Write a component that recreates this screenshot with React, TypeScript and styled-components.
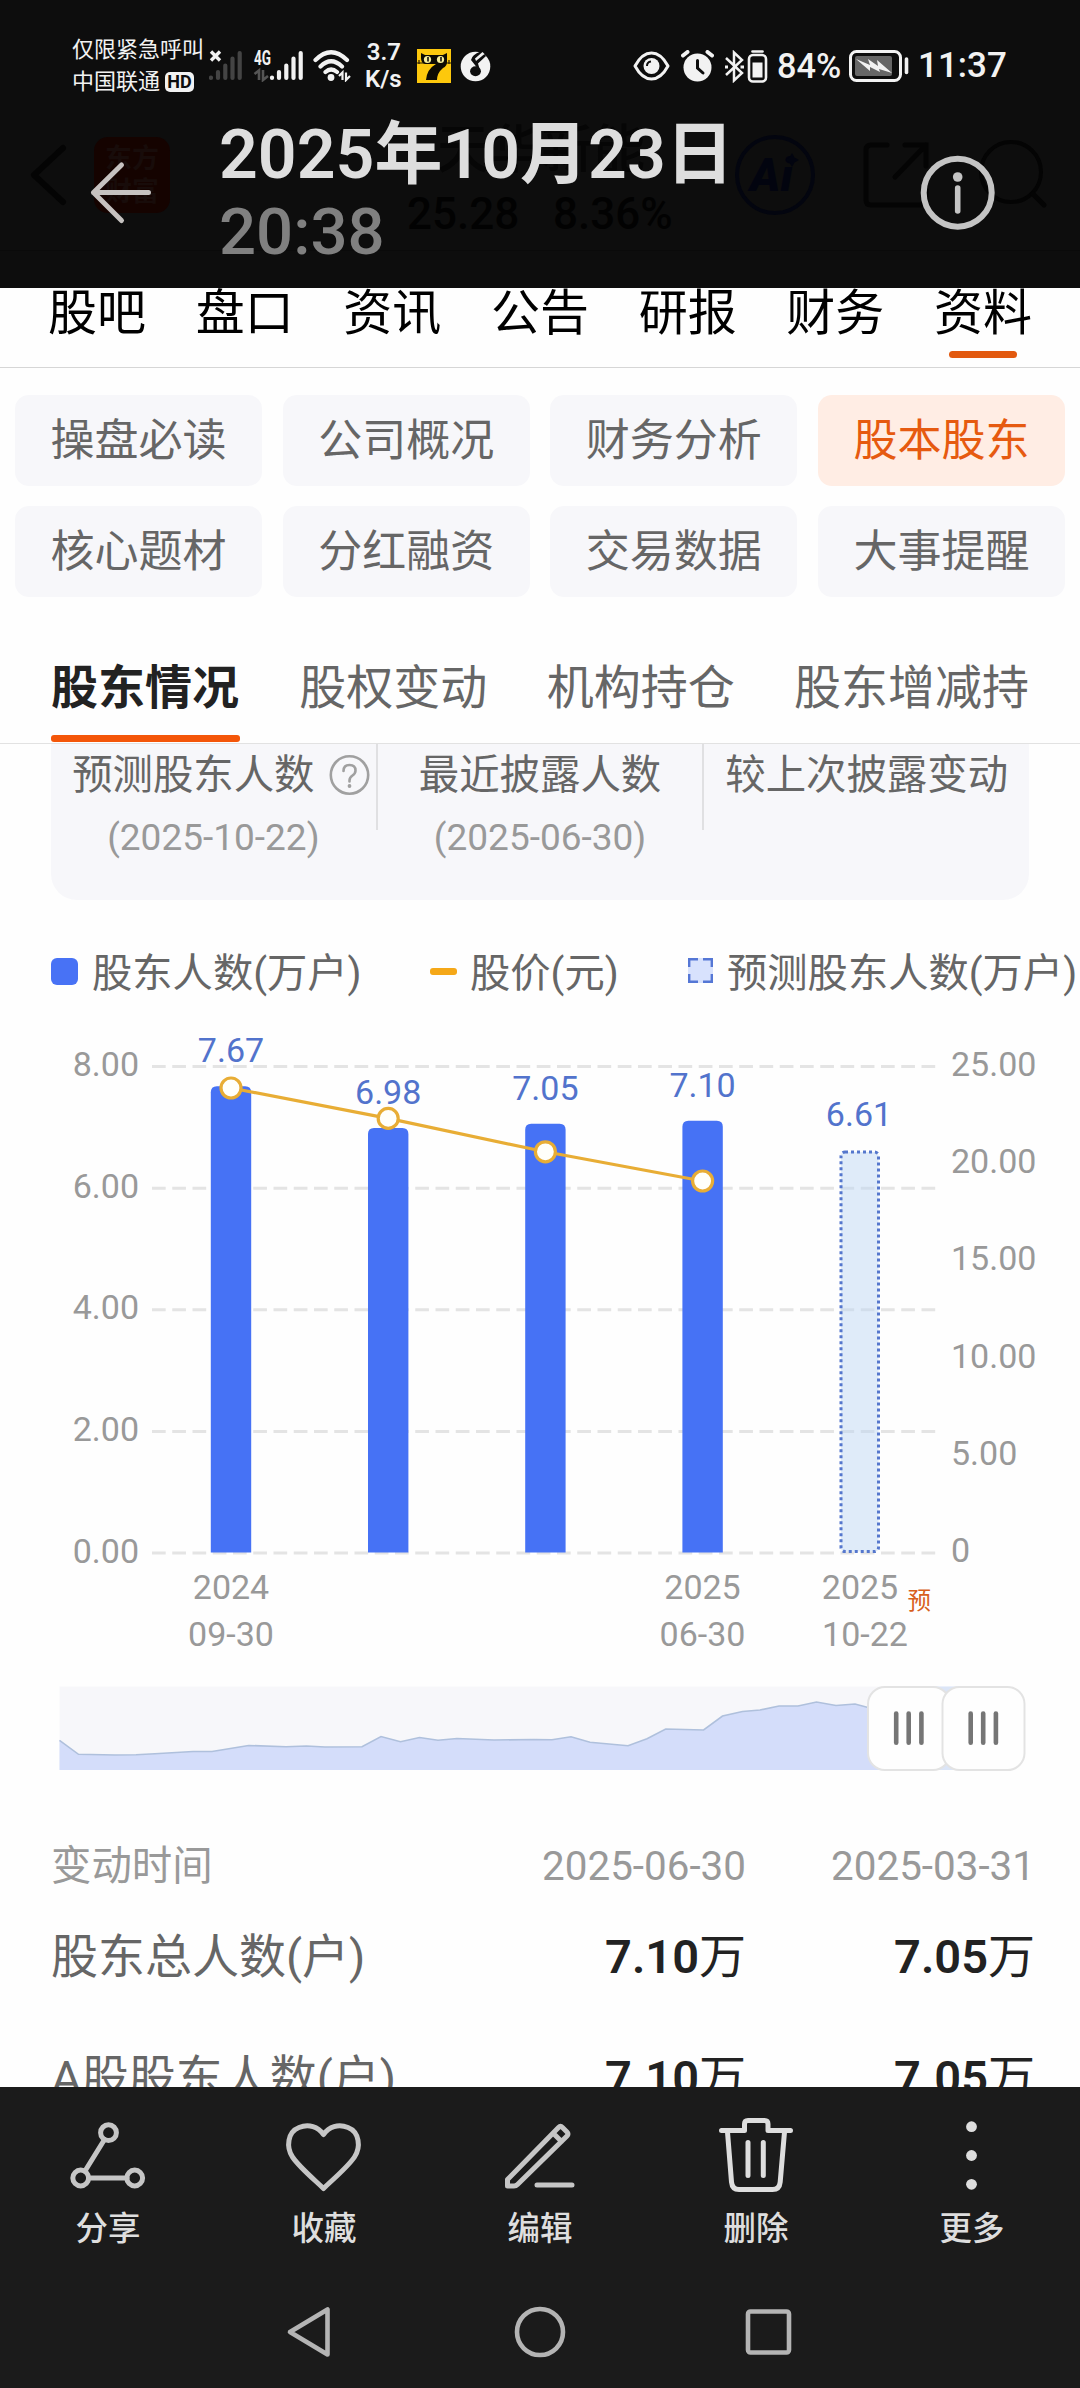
import React from "react";
import styled, { createGlobalStyle } from "styled-components";

const Global = createGlobalStyle`
  * { box-sizing: border-box; }
  body { margin: 0; background: #fff; }
  body, svg text { font-family: Roboto, "Noto Sans CJK SC", sans-serif; }
  svg { display: block; flex: none; }
`;

const Screen = styled.div`
  width: 1080px;
  height: 2388px;
  display: flex;
  flex-direction: column;
  overflow: hidden;
  background: #fefefe;
`;

/* ---------- dark overlay header ---------- */
const Header = styled.header`
  position: relative;
  height: 288px;
  flex: none;
  background: #0d0d0d;
  color: #f2f2f2;
  overflow: hidden;
`;
const Ghost = styled.svg`
  position: absolute;
  left: 0;
  top: 0;
`;
const StatusBar = styled.div`
  position: relative;
  height: 132px;
  display: flex;
  align-items: center;
  padding-left: 72px;
`;
const Carrier = styled.div`
  width: 134px;
  display: flex;
  flex-direction: column;
  gap: 10px;
  font-size: 22px;
  line-height: 22px;
  white-space: nowrap;
`;
const CarrierLine = styled.div`
  display: flex;
  align-items: center;
  gap: 5px;
  height: 22px;
`;
const HdBadge = styled.span`
  width: 29px;
  height: 20px;
  border-radius: 5px;
  background: #f2f2f2;
  color: #0d0d0d;
  font-size: 18px;
  font-weight: 700;
  line-height: 20px;
  text-align: center;
`;
const Speed = styled.div`
  width: 36px;
  margin-left: 12px;
  margin-right: 1px;
  font-size: 24px;
  line-height: 27px;
  font-weight: 600;
  text-align: right;
`;
const StatusText = styled.span<{ $ml: number; $w: number; $size: number }>`
  margin-left: ${(p) => p.$ml}px;
  width: ${(p) => p.$w}px;
  font-size: ${(p) => p.$size}px;
  line-height: 40px;
  font-weight: 500;
  white-space: nowrap;
`;
const IconSlot = styled.span<{ $ml: number }>`
  margin-left: ${(p) => p.$ml}px;
  display: flex;
`;
const TitleBar = styled.div`
  position: relative;
  height: 156px;
  display: flex;
  padding-left: 88px;
`;
const BackSlot = styled.div`
  width: 131px;
  padding-top: 28px;
`;
const TitleText = styled.div`
  width: 699px;
  margin-top: -17px;
`;
const DateLine = styled.div`
  font-size: 68px;
  line-height: 80px;
  font-weight: 600;
  color: #dedede;
  white-space: nowrap;
`;
const TimeLine = styled.div`
  font-size: 65.3px;
  line-height: 74px;
  font-weight: 500;
  color: #808080;
`;
const InfoSlot = styled.div`
  padding-top: 21px;
`;

/* ---------- page content ---------- */
const Content = styled.main`
  height: 1799px;
  flex: none;
  display: flex;
  flex-direction: column;
  overflow: hidden;
`;
const TopTabs = styled.nav`
  height: 80px;
  flex: none;
  display: flex;
  justify-content: space-between;
  padding: 0 48px;
  border-bottom: 1px solid #d6d6d6;
`;
const TopTab = styled.div`
  height: 79px;
  padding-top: 2px;
  display: flex;
  flex-direction: column;
  align-items: center;
  font-size: 49px;
  line-height: 48px;
  color: #000;
`;
const TopMark = styled.span`
  width: 68px;
  height: 7px;
  margin-top: 13px;
  border-radius: 4px;
  background: #e2590f;
`;
const ChipGrid = styled.div`
  display: grid;
  grid-template-columns: repeat(4, 247px);
  justify-content: space-between;
  row-gap: 20px;
  padding: 27px 15px 0;
`;
const Chip = styled.div<{ $on?: boolean }>`
  height: 91px;
  padding-top: 1px;
  border-radius: 14px;
  background: ${(p) => (p.$on ? "#ffede4" : "#f7f7fa")};
  color: ${(p) => (p.$on ? "#e65a10" : "#666")};
  font-size: 44px;
  line-height: 90px;
  text-align: center;
`;
const SubTabs = styled.nav`
  height: 147px;
  flex: none;
  display: flex;
  justify-content: space-between;
  padding: 0 51px;
  border-bottom: 1px solid #e2e2e2;
`;
const SubTab = styled.div<{ $on?: boolean }>`
  height: 146px;
  display: flex;
  flex-direction: column;
  padding-top: 64px;
  font-size: 47px;
  line-height: 54px;
  font-weight: ${(p) => (p.$on ? 700 : 400)};
  color: ${(p) => (p.$on ? "#222" : "#666")};
`;
const SubMark = styled.span`
  height: 7px;
  margin-top: 20px;
  width: 189px;
  border-radius: 3px;
  background: #f45609;
`;
const Summary = styled.section`
  height: 156px;
  flex: none;
  margin: 0 51px;
  display: flex;
  border-radius: 0 0 26px 26px;
  background: #f7f7fa;
`;
const SummaryCol = styled.div`
  flex: 1;
  height: 86px;
  display: flex;
  flex-direction: column;
  align-items: center;
  padding-top: 8px;
  & + & { border-left: 2px solid #e0e0e2; }
`;
const SummaryTitle = styled.div<{ $shift?: number }>`
  display: flex;
  align-items: center;
  gap: 14px;
  margin-left: ${(p) => p.$shift ?? 0}px;
  font-size: 40.4px;
  line-height: 48px;
  color: #666;
  white-space: nowrap;
`;
const SummaryDate = styled.div`
  margin-top: 16px;
  font-size: 37px;
  line-height: 44px;
  color: #999;
`;
const Legend = styled.div`
  display: flex;
  align-items: center;
  height: 48px;
  margin-top: 50px;
  padding-left: 51px;
  font-size: 40.3px;
  line-height: 48px;
  color: #666;
  white-space: nowrap;
`;
const LegendItem = styled.div<{ $w: number; $gap: number }>`
  width: ${(p) => p.$w}px;
  display: flex;
  flex: none;
  align-items: center;
  gap: ${(p) => p.$gap}px;
`;
const Swatch = styled.span`
  width: 27px;
  height: 27px;
  margin-bottom: 6px;
  border-radius: 6px;
  background: #4872f5;
`;
const Dash = styled.span`
  width: 27px;
  height: 7px;
  margin-bottom: 5px;
  border-radius: 3px;
  background: #f5a818;
`;
const DashedSwatch = styled.svg`
  margin-bottom: 7px;
`;
const Table = styled.section`
  display: flex;
  flex-direction: column;
  padding: 68px 45px 0 51px;
`;
const Row = styled.div<{ $h: number; $head?: boolean }>`
  height: ${(p) => p.$h}px;
  flex: none;
  display: grid;
  grid-template-columns: 1fr 285px 289px;
  align-items: center;
  font-size: ${(p) => (p.$head ? 40.4 : 47)}px;
  color: ${(p) => (p.$head ? "#999" : "#666")};
  white-space: nowrap;
`;
const HeadCell = styled.span<{ $right?: boolean }>`
  line-height: 48px;
  padding-bottom: 1px;
  text-align: ${(p) => (p.$right ? "right" : "left")};
`;
const Value = styled.span`
  text-align: right;
  color: #222;
  b { font-weight: 600; }
`;

/* ---------- bottom bars ---------- */
const Bottom = styled.footer`
  height: 301px;
  flex: none;
  background: #1b1b1b;
`;
const Actions = styled.div`
  height: 187px;
  display: grid;
  grid-template-columns: repeat(5, 216px);
`;
const Action = styled.div`
  display: flex;
  flex-direction: column;
  align-items: center;
  padding-top: 28px;
  font-size: 32.5px;
  line-height: 40px;
  font-weight: 500;
  color: #dedede;
`;
const ActionLabel = styled.span`
  margin-top: 14px;
`;
const NavKeys = styled.div`
  display: flex;
  justify-content: center;
  gap: 174px;
  padding-top: 30px;
`;

const BARS = [
  { x: 231, v: 7.67, label: "7.67", price: 1088 },
  { x: 388.2, v: 6.98, label: "6.98", price: 1118.4 },
  { x: 545.4, v: 7.05, label: "7.05", price: 1151.8 },
  { x: 702.6, v: 7.1, label: "7.10", price: 1181 },
];
const BASE = 1552.5;
const PER_UNIT = 60.8;
const topOf = (v: number) => BASE - v * PER_UNIT;

const roundTop = (x: number, y: number, w: number, r: number) =>
  `M${x} ${BASE}V${y + r}Q${x} ${y} ${x + r} ${y}H${x + w - r}Q${x + w} ${y} ${x + w} ${y + r}V${BASE}Z`;

function Chart() {
  return (
    <svg width="1080" height="676" viewBox="0 998 1080 676" fontSize="34">
      {[0, 2, 4, 6, 8].map((v) => (
        <g key={v}>
          <line x1="152" x2="936" y1={topOf(v) + 0.5} y2={topOf(v) + 0.5} stroke="#e4e4e4" strokeWidth="3" strokeDasharray="13.7 6.55" />
          <text x="139" y={topOf(v) + 10} textAnchor="end" fill="#999">{v.toFixed(2)}</text>
        </g>
      ))}
      {["0", "5.00", "10.00", "15.00", "20.00", "25.00"].map((t, i) => (
        <text key={t} x="951" y={1562 - i * 97.2} fill="#999">{t}</text>
      ))}
      {BARS.map((b) => (
        <path key={b.x} d={roundTop(b.x - 20.2, topOf(b.v), 40.4, 6)} fill="#4672f5" />
      ))}
      <rect x="841" y="1152" width="37.5" height="399.5" rx="4" fill="#bcd5f4" fillOpacity=".46" stroke="#5577cd" strokeWidth="3" strokeDasharray="3 3" />
      <polyline points={BARS.map((b) => `${b.x},${b.price}`).join(" ")} fill="none" stroke="#e8ad35" strokeWidth="3.2" />
      {BARS.map((b) => (
        <circle key={b.x} cx={b.x} cy={b.price} r="10" fill="#fffffa" stroke="#e8ad35" strokeWidth="3.2" />
      ))}
      {[...BARS, { x: 859, v: 6.61, label: "6.61" }].map((b) => (
        <text key={b.label} x={b.x} y={topOf(b.v) - 24.2} textAnchor="middle" fill="#5273cc">{b.label}</text>
      ))}
      <g fill="#999" textAnchor="middle">
        <text x="231" y="1599">2024</text>
        <text x="231" y="1646">09-30</text>
        <text x="702.500" y="1599">2025</text>
        <text x="702.500" y="1646">06-30</text>
        <text x="860" y="1599">2025</text>
        <text x="865" y="1646">10-22</text>
      </g>
      <text x="907.500" y="1609" fontSize="23.5" fill="#d8601c">预</text>
    </svg>
  );
}

const TREND =
  "59.5,1740.3 78.5,1754.3 115,1755 136,1754.7 155,1753.7 193,1751.5 212,1751.5 248.6,1745.5 286,1746.7 306.5,1746 325,1747 362,1746.7 381,1736.5 400.5,1741.7 419.5,1737.5 438,1740.3 457,1738.5 494,1740 534,1739.5 552,1739.7 571,1736.7 590,1742.3 628,1745.7 647,1738.7 665.7,1729 703.6,1730 722.5,1716 742.5,1711.5 760,1710 779,1706 798,1706 816.5,1702 836,1705.5 855,1704 868,1707.5 985,1707.5";

function RangeStrip() {
  return (
    <svg width="1080" height="100" viewBox="0 1674 1080 100">
      <rect x="59.5" y="1686.5" width="925" height="83.5" fill="#f7f7fa" />
      <polygon points={`59.5,1770 ${TREND} 985,1770`} fill="#d4ddfa" />
      <polyline points={TREND} fill="none" stroke="#afc0dc" strokeWidth="1.6" />
      <rect x="900" y="1686.5" width="85" height="83.5" fill="#dbe5f7" />
      {[868, 942.5].map((x) => (
        <g key={x}>
          <rect x={x} y="1687" width="82" height="83" rx="17" fill="#fefefe" stroke="#e3e3e3" strokeWidth="2" />
          {[28.2, 40.7, 53.4].map((d) => (
            <line key={d} x1={x + d} x2={x + d} y1="1713.5" y2="1742.8" stroke="#757575" strokeWidth="4.6" strokeLinecap="round" />
          ))}
        </g>
      ))}
    </svg>
  );
}

function GhostToolbar() {
  return (
    <Ghost width="1080" height="288" viewBox="0 0 1080 288" fill="none">
      <path d="M63 148L34 175L63 202" stroke="#040404" strokeWidth="6" strokeLinecap="round" strokeLinejoin="round" />
      <rect x="94" y="137" width="76" height="76" rx="14" fill="#150300" />
      <g fill="#180c0a" fontSize="27" fontWeight="700">
        <text x="105" y="168">东方</text>
        <text x="105" y="201">财富</text>
      </g>
      <text x="437" y="168" fontSize="52" fontWeight="500" fill="#060606">天华新能</text>
      <g fill="#020202" fontSize="44" fontWeight="500">
        <text x="407" y="229">25.28</text>
        <text x="553" y="229">8.36%</text>
      </g>
      <circle cx="775" cy="175" r="38" stroke="#03050f" strokeWidth="4" />
      <text x="750" y="191" fontSize="46" fontWeight="900" fontStyle="italic" fill="#02040f">Ai</text>
      <path d="M792 153l2.500 4.500 4.500 2.500-4.500 2.500-2.500 4.500-2.500-4.500-4.500-2.500 4.500-2.500z" fill="#02040f" />
      <path d="M887 145H871Q866 145 866 150V200Q866 205 871 205H921Q926 205 926 200V190M905 145H926V166M926 145L895 177" stroke="#040404" strokeWidth="5" strokeLinecap="round" />
      <circle cx="1011" cy="172" r="30" stroke="#040404" strokeWidth="4" />
      <path d="M1033 194L1044 205" stroke="#040404" strokeWidth="5" strokeLinecap="round" />
      <path d="M0 250.500H1080" stroke="#0a0a0a" />
    </Ghost>
  );
}

const Signal = ({ color }: { color: string }) => (
  <g stroke={color} strokeWidth="4.200" strokeLinecap="round">
    <path d="M2 27.500V28M9 22V28M16.300 15.500V28M23.500 8.500V28M30.700 3V28" />
  </g>
);

function StatusIcons() {
  return (
    <StatusBar>
      <Carrier>
        <CarrierLine>仅限紧急呼叫</CarrierLine>
        <CarrierLine>中国联通<HdBadge>HD</HdBadge></CarrierLine>
      </Carrier>
      <IconSlot $ml={3}>
        <svg width="35" height="32" viewBox="0 0 35 32" fill="none">
          <Signal color="#444" />
          <path d="M2 1.500L11 10.500M11 1.500L2 10.500" stroke="#f2f2f2" strokeWidth="3.400" />
        </svg>
      </IconSlot>
      <IconSlot $ml={9}>
        <svg width="53" height="32" viewBox="0 0 53 32" fill="none">
          <text x="1" y="14.500" fontSize="20" fontWeight="700" fill="#f2f2f2" textLength="17" lengthAdjust="spacingAndGlyphs">4G</text>
          <path d="M1.500 24L6 20.500V30M10 20V30L15 26" stroke="#555" strokeWidth="2.600" />
          <g transform="translate(17 0)"><Signal color="#f2f2f2" /></g>
        </svg>
      </IconSlot>
      <IconSlot $ml={7}>
        <svg width="40" height="32" viewBox="0 0 40 32" fill="none" stroke="#f2f2f2" strokeWidth="4.200" strokeLinecap="round">
          <path d="M2.500 10Q18 -5.500 34 10M7.500 16.500Q18 6 29 16.500M12.500 22Q18 17 24 22" />
          <circle cx="18" cy="27.500" r="3.400" fill="#f2f2f2" stroke="none" />
          <path d="M26 26L29.500 22.500V30M33 22.500V30L37 26" strokeWidth="2.200" strokeLinecap="butt" />
        </svg>
      </IconSlot>
      <Speed>3.7<br />K/s</Speed>
      <IconSlot $ml={15}>
        <svg width="34" height="34" viewBox="0 0 34 34">
          <rect width="34" height="34" fill="#fdc80c" />
          <path d="M0 14H34M2 11V15M32 11V15" stroke="#231a05" strokeWidth="1.200" />
          <path d="M4 4L8 6H26L30 4V13Q30 17 26 19Q20 24 20 31H9Q10 20 19 15H8Q4 14 4 9Z" fill="#0d0a03" />
          <circle cx="10.500" cy="10.500" r="3.600" fill="#f7ef9a" />
          <circle cx="23.500" cy="10.500" r="3.600" fill="#f7ef9a" />
          <path d="M11 8V12.500M24 8V12.500" stroke="#111" strokeWidth="1.600" />
        </svg>
      </IconSlot>
      <IconSlot $ml={9}>
        <svg width="31" height="31" viewBox="0 0 31 31">
          <circle cx="15.500" cy="15.500" r="14.800" fill="#f2f2f2" />
          <path d="M20.500 .5Q12 3.500 11 9L20.500 21L18 12.500L26 5Z" fill="#0d0d0d" />
          <ellipse cx="15.500" cy="20.300" rx="5.400" ry="5" fill="#0d0d0d" />
          <path d="M22.500 1L15 7.500L16 10L24.500 3Z" fill="#f2f2f2" />
        </svg>
      </IconSlot>
      <IconSlot $ml={142}>
        <svg width="37" height="30" viewBox="0 0 37 30" fill="none">
          <path d="M2 15Q9 2 18.500 2T35 15Q28 28 18.500 28T2 15Z" stroke="#f2f2f2" strokeWidth="3" strokeLinejoin="round" />
          <circle cx="18.500" cy="15" r="8" fill="#f2f2f2" />
          <path d="M14 15Q14 11 18 10.500" stroke="#0d0d0d" strokeWidth="2" />
        </svg>
      </IconSlot>
      <IconSlot $ml={11}>
        <svg width="33" height="32" viewBox="0 0 33 32" fill="none">
          <circle cx="16.500" cy="17.500" r="14" fill="#f2f2f2" />
          <path d="M2 5.500L6.500 2M31 5.500L26.500 2" stroke="#f2f2f2" strokeWidth="4" strokeLinecap="round" />
          <path d="M16.500 10.500V18L22 23" stroke="#0d0d0d" strokeWidth="3" strokeLinecap="round" />
        </svg>
      </IconSlot>
      <IconSlot $ml={10}>
        <svg width="44" height="33" viewBox="0 0 44 33" fill="none" stroke="#f2f2f2">
          <path d="M2 8L18 23L10 30.500V2.500L18 10L2 25" strokeWidth="2.500" />
          <path d="M1 17H4M16.500 17H20" strokeWidth="3" />
          <rect x="25" y="5" width="17" height="26.500" rx="4" strokeWidth="2.600" />
          <path d="M28.500 1.500H38.500" strokeWidth="2.600" strokeLinecap="round" />
          <rect x="28.500" y="12.500" width="10" height="15" fill="#f2f2f2" stroke="none" />
        </svg>
      </IconSlot>
      <StatusText $ml={9} $w={65} $size={34.3}>84%</StatusText>
      <IconSlot $ml={7}>
        <svg width="60" height="32" viewBox="0 0 60 32" fill="none">
          <rect x="1.500" y="1.500" width="50" height="29" rx="6" stroke="#f2f2f2" strokeWidth="3" />
          <rect x="6" y="6" width="37" height="20" rx="2" fill="#666" />
          <path d="M7 9L21 15L19 9L29 16L28 10L43 23L30 19L31 22L21 17V21Z" fill="#f2f2f2" />
          <path d="M57.500 9V22.500" stroke="#f2f2f2" strokeWidth="3.600" strokeLinecap="round" />
        </svg>
      </IconSlot>
      <StatusText $ml={9} $w={92} $size={35}>11:37</StatusText>
    </StatusBar>
  );
}

const ACTIONS = [
  {
    label: "分享",
    icon: (
      <g>
        <circle cx="40.500" cy="17.700" r="7.900" />
        <circle cx="12.700" cy="63" r="7.900" />
        <circle cx="66.700" cy="63" r="7.900" />
        <path d="M36.500 24.500L17 56M20.500 63H59" />
      </g>
    ),
  },
  {
    label: "收藏",
    icon: <path d="M39.500 73.500C32 66 16 53 8.500 42C2 32 3.500 17 15 12.500C25 8.500 34 12 39.500 19.500C45 12 54 8.500 64 12.500C75.500 17 77 32 70.500 42C63 53 47 66 39.500 73.500Z" />,
  },
  {
    label: "编辑",
    icon: (
      <g>
        <path d="M7.500 71V64.500L58.500 12.500Q60.500 10.500 62.500 12.500L67 17Q69 19 67 21L17.500 69.500Q16 71 14 71ZM53.500 18.500L61.500 26.500M37 70H72" />
      </g>
    ),
  },
  {
    label: "删除",
    icon: (
      <g stroke="#dedede">
        <path d="M5.500 15.500H28.500V9Q28.500 5.500 32 5.500H48.500Q52 5.500 52 9V15.500H74.500M11.500 17L15.500 67Q16.200 74.500 23 74.500H56.500Q63.500 74.500 64.200 67L68.500 17M32 27.500V60.500M47.300 27.500V60.500" />
      </g>
    ),
  },
  {
    label: "更多",
    icon: (
      <g fill="#dedede" stroke="none">
        <circle cx="39.500" cy="11.700" r="5.400" />
        <circle cx="39.500" cy="40.500" r="5.400" />
        <circle cx="39.500" cy="69.300" r="5.400" />
      </g>
    ),
  },
];

const TOP_TABS = ["股吧", "盘口", "资讯", "公告", "研报", "财务", "资料"];
const CHIPS = ["操盘必读", "公司概况", "财务分析", "股本股东", "核心题材", "分红融资", "交易数据", "大事提醒"];
const SUB_TABS = ["股东情况", "股权变动", "机构持仓", "股东增减持"];
const ROWS = ["股东总人数(户)", "A股股东人数(户)"];

export default function App() {
  return (
    <Screen>
      <Global />
      <Header>
        <GhostToolbar />
        <StatusIcons />
        <TitleBar>
          <BackSlot>
            <svg width="66" height="66" viewBox="0 0 66 66" fill="none" stroke="#c6c2c0" strokeWidth="5" strokeLinecap="round" strokeLinejoin="round">
              <path d="M33.500 5L5.500 32.500L33.500 60.500M5.500 32.500H60.500" />
            </svg>
          </BackSlot>
          <TitleText>
            <DateLine>2025年10月23日</DateLine>
            <TimeLine>20:38</TimeLine>
          </TitleText>
          <InfoSlot>
            <svg width="80" height="80" viewBox="0 0 80 80" fill="none" stroke="#c4c4c4" strokeLinecap="round">
              <circle cx="39.700" cy="39.700" r="34" strokeWidth="6" />
              <circle cx="39.700" cy="24" r="4.800" fill="#c4c4c4" stroke="none" />
              <path d="M39.700 35V58" strokeWidth="5.600" />
            </svg>
          </InfoSlot>
        </TitleBar>
      </Header>

      <Content>
        <TopTabs>
          {TOP_TABS.map((t) => (
            <TopTab key={t}>
              {t}
              {t === "资料" && <TopMark />}
            </TopTab>
          ))}
        </TopTabs>
        <ChipGrid>
          {CHIPS.map((c) => (
            <Chip key={c} $on={c === "股本股东"}>{c}</Chip>
          ))}
        </ChipGrid>
        <SubTabs>
          {SUB_TABS.map((t, i) => (
            <SubTab key={t} $on={i === 0}>
              {t}
              {i === 0 && <SubMark />}
            </SubTab>
          ))}
        </SubTabs>
        <Summary>
          <SummaryCol>
            <SummaryTitle $shift={15}>
              预测股东人数
              <svg width="41" height="42" viewBox="0 0 41 42" fill="none" stroke="#a0a0a0" strokeWidth="2.600">
                <circle cx="20.500" cy="20" r="18.700" />
                <path d="M14.500 16Q14.500 10 20.500 10T26.500 15.500Q26.500 18.500 23.500 20.500T20.500 25.500V26.500" strokeLinecap="round" />
                <circle cx="20.500" cy="31" r="1.900" fill="#a0a0a0" stroke="none" />
              </svg>
            </SummaryTitle>
            <SummaryDate>(2025-10-22)</SummaryDate>
          </SummaryCol>
          <SummaryCol>
            <SummaryTitle>最近披露人数</SummaryTitle>
            <SummaryDate>(2025-06-30)</SummaryDate>
          </SummaryCol>
          <SummaryCol>
            <SummaryTitle>较上次披露变动</SummaryTitle>
          </SummaryCol>
        </Summary>
        <Legend>
          <LegendItem $w={379} $gap={14}><Swatch />股东人数(万户)</LegendItem>
          <LegendItem $w={258} $gap={13}><Dash />股价(元)</LegendItem>
          <LegendItem $w={392} $gap={14}>
            <DashedSwatch width="25" height="25" viewBox="0 0 25 25">
              <rect width="25" height="25" fill="#d8e2fd" />
              <path d="M1.200 9V1.200H10M15 1.200H23.800V9M23.800 16V23.800H15M10 23.800H1.200V16" fill="none" stroke="#5577d5" strokeWidth="2.400" />
            </DashedSwatch>
            预测股东人数(万户)
          </LegendItem>
        </Legend>
        <Chart />
        <RangeStrip />
        <Table>
          <Row $h={50} $head>
            <HeadCell>变动时间</HeadCell>
            <HeadCell $right>2025-06-30</HeadCell>
            <HeadCell $right>2025-03-31</HeadCell>
          </Row>
          {ROWS.map((r) => (
            <Row key={r} $h={121}>
              <span>{r}</span>
              <Value><b>7.10</b>万</Value>
              <Value><b>7.05</b>万</Value>
            </Row>
          ))}
        </Table>
      </Content>

      <Bottom>
        <Actions>
          {ACTIONS.map((a) => (
            <Action key={a.label}>
              <svg width="80" height="80" viewBox="0 0 80 80" fill="none" stroke="#c6c6c6" strokeWidth="5" strokeLinecap="round" strokeLinejoin="round">
                {a.icon}
              </svg>
              <ActionLabel>{a.label}</ActionLabel>
            </Action>
          ))}
        </Actions>
        <NavKeys>
          <svg width="56" height="56" viewBox="0 0 56 56" fill="none" stroke="#b4b4b4" strokeWidth="4.600" strokeLinejoin="round">
            <path d="M8 28L45.500 5.500V50.500Z" />
          </svg>
          <svg width="56" height="56" viewBox="0 0 56 56" fill="none" stroke="#b4b4b4" strokeWidth="4.600">
            <circle cx="28" cy="28" r="23" />
          </svg>
          <svg width="56" height="56" viewBox="0 0 56 56" fill="none" stroke="#b4b4b4" strokeWidth="4.600">
            <rect x="6" y="7.500" width="41" height="41" rx="2.500" />
          </svg>
        </NavKeys>
      </Bottom>
    </Screen>
  );
}
